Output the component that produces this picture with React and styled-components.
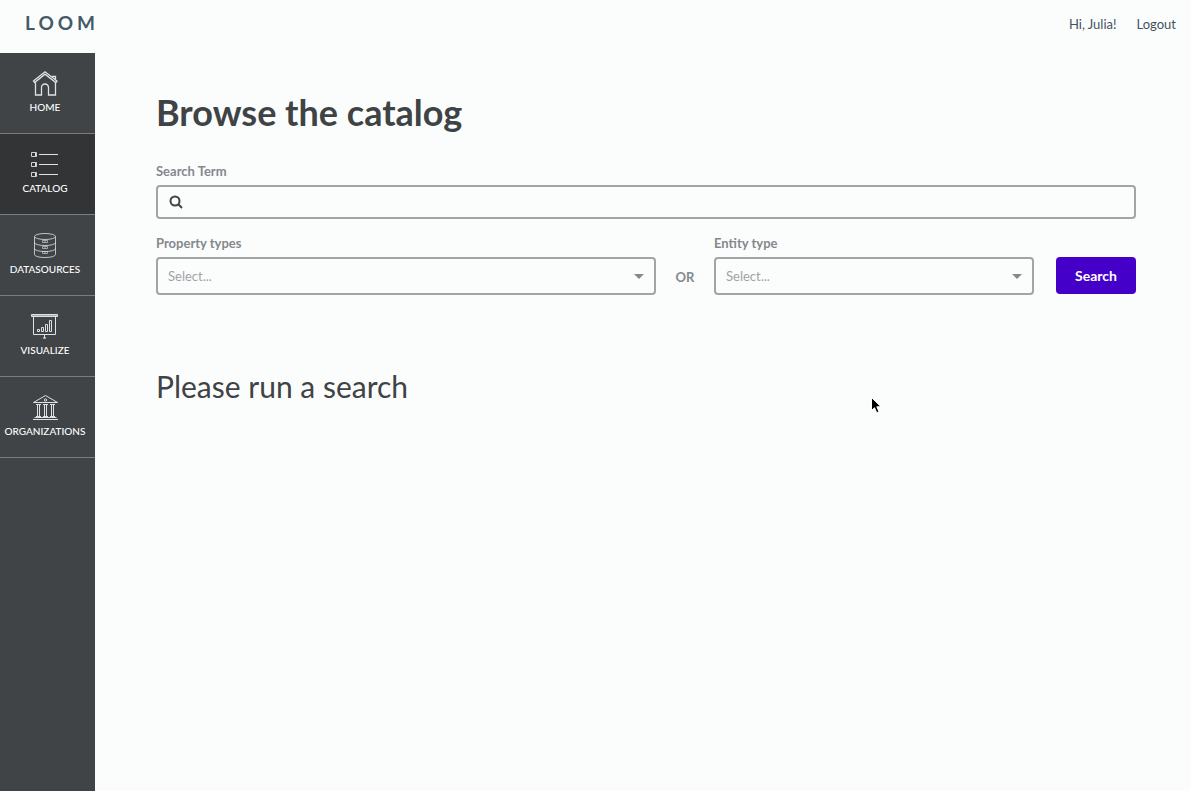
import React from "react";
import styled, { createGlobalStyle } from "styled-components";

const GlobalStyle = createGlobalStyle`
  *, *::before, *::after { box-sizing: border-box; }
  body {
    margin: 0;
    background: #fbfdfd;
    color: #3f4345;
    font-family: Lato, "Liberation Sans", sans-serif;
    font-size: 13px;
  }
`;

const Page = styled.div`
  min-height: 100vh;
  display: flex;
  flex-direction: column;
  position: relative;
`;

const Header = styled.header`
  display: flex;
  justify-content: space-between;
  align-items: flex-start;
  height: 53px;
  padding: 12px 15px 0 25px;
`;

const Logo = styled.a`
  color: #455a66;
  font-size: 19px;
  font-weight: 700;
  line-height: 22px;
  letter-spacing: 4px;
  text-decoration: none;
`;

const UserNav = styled.nav`
  display: flex;
  gap: 20px;
  color: #43535d;
  line-height: 24px;
`;

const TextLink = styled.a`
  color: inherit;
  text-decoration: none;
`;

const Body = styled.div`
  flex: 1;
  display: flex;
`;

const Sidebar = styled.nav`
  flex: 0 0 95px;
  background: #404446;
`;

const NavItem = styled.a`
  display: flex;
  flex-direction: column;
  align-items: center;
  gap: 1px;
  height: 81px;
  padding: 16px 5px 0 0;
  border-bottom: 1px solid #7b7e80;
  background: ${(p) => (p.$active ? "#333436" : "transparent")};
  color: #fff;
  font-size: 10px;
  font-weight: 500;
  line-height: 14px;
  text-decoration: none;
  white-space: nowrap;
`;

const Icon = styled.svg`
  width: 30px;
  height: 30px;
  fill: none;
  stroke: #dfe1e5;
  stroke-width: 1;
`;

const Main = styled.main`
  flex: 1;
  min-width: 0;
  padding: 35px 55px 40px 61px;
`;

const Title = styled.h1`
  margin: 0 0 25px;
  font-size: 36px;
  font-weight: 700;
  line-height: 48px;
`;

const Message = styled.h2`
  margin: 71px 0 0;
  font-size: 30px;
  font-weight: 400;
  line-height: 40px;
`;

const Form = styled.form`
  display: grid;
  gap: 14px;
`;

const FilterRow = styled.div`
  display: grid;
  grid-template-columns: 25fr 58px 16fr 102px;
  align-items: end;
`;

const Field = styled.div`
  display: flex;
  flex-direction: column;
  min-width: 0;
`;

const Label = styled.label`
  color: #85888c;
  font-size: 13px;
  font-weight: 700;
  line-height: 20px;
  margin-bottom: 4px;
`;

const Control = styled.div`
  position: relative;
  display: flex;
`;

const SearchInput = styled.input`
  width: 100%;
  height: 34px;
  padding: 0 12px 0 34px;
  border: 2px solid #a0a5a8;
  border-radius: 4px;
  background: transparent;
  color: inherit;
  font: inherit;
`;

const SearchIcon = styled.svg`
  position: absolute;
  left: 13px;
  top: 10px;
  width: 14px;
  height: 14px;
  fill: none;
  stroke: #3f4345;
  stroke-width: 2;
  pointer-events: none;
`;

const Select = styled.select`
  appearance: none;
  width: 100%;
  height: 38px;
  padding: 0 30px 0 10px;
  border: 2px solid #a0a5a8;
  border-radius: 4px;
  background: transparent;
  color: #a0a3a5;
  font: inherit;
`;

const Caret = styled.svg`
  position: absolute;
  right: 12px;
  top: 17px;
  width: 10px;
  height: 5px;
  fill: #85888c;
  pointer-events: none;
`;

const Or = styled.span`
  color: #85888c;
  font-weight: 700;
  line-height: 36px;
  text-align: center;
`;

const SearchButton = styled.button`
  justify-self: end;
  align-self: end;
  width: 80px;
  height: 37px;
  margin-bottom: 1px;
  padding: 0;
  border: 0;
  border-radius: 4px;
  background: #4400c8;
  color: #fff;
  font: inherit;
  font-size: 14px;
  font-weight: 700;
`;

const Pointer = styled.svg`
  position: absolute;
  left: 870px;
  top: 396px;
  width: 13px;
  height: 18px;
  pointer-events: none;
`;

const HomeIcon = () => (
  <Icon viewBox="0 0 30 30" aria-hidden="true">
    <g strokeWidth="1.3">
      <path d="M3.500 12 15 2.800 27 12l-1.200 1.500L15 5.200 4.700 13.500z" />
      <path d="M5.500 13.500v12.500h6v-7.500a3.500 3.500 0 0 1 7 0v7.500h7V13.500M22.500 8.500V7.500h3v3.500" />
    </g>
  </Icon>
);

const CatalogIcon = () => (
  <Icon viewBox="0 0 30 30" aria-hidden="true">
    <path d="M1.500 2.500h4v4h-4zM1.500 12.500h4v4h-4zM1.500 22.500h4v4h-4zM5.500 2.500h1v4h-1zM5.500 12.500h1v4h-1zM5.500 22.500h1v4h-1z" strokeWidth="0.900" />
    <path d="M9 4.500h19M9 14.500h19M9 24.500h19" />
  </Icon>
);

const DatabaseIcon = () => (
  <Icon viewBox="0 0 30 30" aria-hidden="true">
    <g strokeWidth="0.8">
      <ellipse cx="15" cy="5.500" rx="10.500" ry="3" />
      <path d="M4.500 5.500v18c0 4 21 4 21 0v-18M4.500 11.500c0 4 21 4 21 0M4.500 17.500c0 4 21 4 21 0" />
    </g>
    <path
      d="M12.500 9.500h5v2h-5zM12.500 15.500h5v2h-5zM12.500 20.500h5v2h-5zM15 9.500v2M15 15.500v2M15 20.500v2"
      strokeWidth="0.600"
    />
  </Icon>
);

const VisualizeIcon = () => (
  <Icon viewBox="0 0 30 30" aria-hidden="true">
    <path d="M1.500 2.500h26v2h-26z" fill="#a9abb0" />
    <path d="M3.500 5v17.500h22V5M14.500 23v3" />
    <path d="M13.500 25.500h2v1h-2z" strokeWidth="0.700" />
    <path d="M7.500 17.500h2v2h-2zM11.500 15.500h2v4h-2zM15.500 12.500h2v7h-2zM19.500 8.500h2v11h-2z" />
  </Icon>
);

const OrganizationIcon = () => (
  <Icon viewBox="0 0 30 30" aria-hidden="true">
    <path d="M3.500 9.500 15.500 2.500l12 7zM3 26.500h25M4.500 24.500h22" />
    <circle cx="15.500" cy="7" r="1.200" />
    <path d="M6 11.500h5M13 11.500h5M20 11.500h5M6 23.500h5M13 23.500h5M20 23.500h5" />
    <path d="M7.500 11v12M9.500 11v12M14.500 11v12M16.500 11v12M21.500 11v12M23.500 11v12" />
  </Icon>
);

const navItems = [
  { label: "HOME", Glyph: HomeIcon },
  { label: "CATALOG", Glyph: CatalogIcon, active: true },
  { label: "DATASOURCES", Glyph: DatabaseIcon },
  { label: "VISUALIZE", Glyph: VisualizeIcon },
  { label: "ORGANIZATIONS", Glyph: OrganizationIcon },
];

function SelectField({ id, label }) {
  return (
    <Field>
      <Label htmlFor={id}>{label}</Label>
      <Control>
        <Select id={id} defaultValue="">
          <option value="">Select...</option>
        </Select>
        <Caret viewBox="0 0 10 5" aria-hidden="true">
          <path d="M0 0h10L5 5z" />
        </Caret>
      </Control>
    </Field>
  );
}

export default function App() {
  return (
    <Page>
      <GlobalStyle />
      <Header>
        <Logo href="#">LOOM</Logo>
        <UserNav>
          <span>Hi, Julia!</span>
          <TextLink href="#">Logout</TextLink>
        </UserNav>
      </Header>
      <Body>
        <Sidebar>
          {navItems.map(({ label, Glyph, active }) => (
            <NavItem key={label} href="#" $active={active}>
              <Glyph />
              {label}
            </NavItem>
          ))}
        </Sidebar>
        <Main>
          <Title>Browse the catalog</Title>
          <Form onSubmit={(e) => e.preventDefault()}>
            <Field>
              <Label htmlFor="term">Search Term</Label>
              <Control>
                <SearchInput id="term" type="text" />
                <SearchIcon viewBox="0 0 14 14" aria-hidden="true">
                  <circle cx="6" cy="6" r="4.500" />
                  <path d="m9.300 9.300 3.700 3.700" />
                </SearchIcon>
              </Control>
            </Field>
            <FilterRow>
              <SelectField id="property" label="Property types" />
              <Or>OR</Or>
              <SelectField id="entity" label="Entity type" />
              <SearchButton type="submit">Search</SearchButton>
            </FilterRow>
          </Form>
          <Message>Please run a search</Message>
        </Main>
      </Body>
      <Pointer viewBox="0 0 13 18" aria-hidden="true">
        <path
          d="M1.500 1.500v13l3-2.800 2.200 5 2.300-1-2.200-4.900h4.200z"
          fill="#000"
          stroke="#fff"
        />
      </Pointer>
    </Page>
  );
}
